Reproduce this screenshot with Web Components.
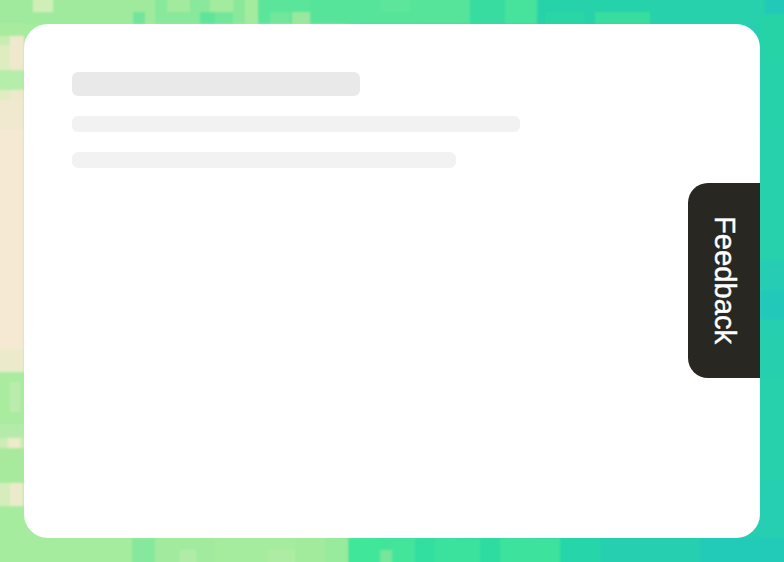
<!DOCTYPE html>
<html>
<head>
<title>Feedback</title>
<style>
  html, body { margin: 0; height: 100%; }
</style>
</head>
<body>
<mosaic-page>
  <skeleton-card>
    <skeleton-line width="288" height="24" tone="#e9e9e9" radius="6"></skeleton-line>
    <skeleton-line width="448" height="16" tone="#f2f2f2" radius="6"></skeleton-line>
    <skeleton-line width="384" height="16" tone="#f2f2f2" radius="6"></skeleton-line>
  </skeleton-card>
  <feedback-tab>Feedback</feedback-tab>
</mosaic-page>

<script>
  // x, y, w, h, colour of the mosaic blocks over the base gradient
  const BLOCKS = [
    // top strip
    [0,0,155,24,'#a0ea9d'],[33,0,20,12,'#d0efb8'],[133,12,12,12,'#70e59b'],[155,0,45,24,'#88e89c'],
    [167,0,23,12,'#a2eb9e'],[200,0,33,12,'#8ae89c'],[210,0,23,12,'#a3eb9e'],[200,12,15,12,'#5fe59b'],
    [215,12,18,12,'#72e69b'],[233,0,25,24,'#8ae89b'],[245,0,13,24,'#a5eb9e'],
    [258,0,52,24,'#5ae59a'],[270,12,20,12,'#72e69b'],[292,12,18,12,'#98e99d'],
    [310,0,160,24,'#55e49a'],[380,0,30,12,'#5ce59b'],[470,0,67,24,'#38dca0'],[505,0,32,24,'#46e29b'],
    [537,0,228,24,'#27d2a9'],[595,12,55,12,'#38de9f'],[545,12,40,12,'#2cd5a6'],[650,0,115,24,'#26d1ab'],
    [765,0,19,14,'#23c9b9'],
    // left strip
    [0,24,24,12,'#a8eb9f'],[0,36,24,9,'#c9ecb0'],[0,45,10,25,'#dfecc0'],[10,36,14,34,'#f0e8cd'],
    [0,70,24,20,'#b5edaa'],[0,90,24,10,'#e0ecc2'],[10,90,14,10,'#eee9cc'],
    [0,100,24,30,'#f0e9cf'],[0,130,24,218,'#f5e9d4'],
    [0,348,24,24,'#ebebcc'],[0,372,24,52,'#a9eb9f'],[10,382,10,30,'#bcecad'],[0,424,24,14,'#b5ebaa'],
    [0,438,24,10,'#cdecb6'],[8,438,12,10,'#eeeacb'],[0,448,24,35,'#a7ea9e'],
    [0,483,24,23,'#d6edbb'],[10,483,12,23,'#ebebcb'],[0,506,24,56,'#a6ec9e'],
    // bottom strip
    [0,538,132,24,'#a6ec9e'],[132,538,23,24,'#85e89c'],[155,538,60,24,'#a2eb9e'],[180,550,16,12,'#b0eca7'],
    [215,538,80,24,'#a6ec9e'],[268,550,30,12,'#aeeca4'],[295,538,30,24,'#a2eb9d'],[325,538,23,24,'#98ea9d'],
    [348,538,32,24,'#40e69a'],[380,538,12,12,'#3fe59b'],[380,550,12,12,'#74e69a'],[392,538,23,24,'#43e59a'],
    [415,538,20,24,'#33dfa0'],[435,538,45,24,'#3ae29d'],[480,538,20,24,'#2fdca2'],[500,538,60,24,'#3ee39c'],
    [560,538,40,24,'#28d5a9'],[600,538,100,24,'#25cfb0'],[700,538,84,24,'#24cbb8'],
    // right strip
    [760,14,24,46,'#27d3a7'],[760,60,24,70,'#27d2aa'],[760,130,24,130,'#27d1ac'],[760,260,24,30,'#25cdb4'],
    [760,290,24,30,'#23c9bb'],[760,320,24,60,'#28d0ae'],[760,380,24,100,'#27d1ab'],[760,480,24,58,'#25ceb2']
  ];

  // push blocks touching the window edge past it, so the blur does not fade them
  function bleed(b) {
    let [x, y, w, h, c] = b;
    if (x === 0) { x = -6; w += 6; }
    if (y === 0) { y = -6; h += 6; }
    if (x + w >= 784) w += 6;
    if (y + h >= 562) h += 6;
    return `<rect x="${x}" y="${y}" width="${w}" height="${h}" fill="${c}"/>`;
  }

  class MosaicPage extends HTMLElement {
    constructor() {
      super();
      this.attachShadow({ mode: 'open' });
      this.shadowRoot.innerHTML = `
        <style>
          :host { display: block; position: relative; width: 784px; height: 562px; box-sizing: border-box; padding: 24px; overflow: hidden; background: #3fe09d; }
          svg { position: absolute; inset: 0; }
          .content { position: relative; height: 100%; }
        </style>
        <svg width="784" height="562" viewBox="0 0 784 562" aria-hidden="true">
          <defs>
            <linearGradient id="base">
              <stop offset="0" stop-color="#a6ec9e"/>
              <stop offset=".43" stop-color="#a4eb9e"/>
              <stop offset=".46" stop-color="#46e59a"/>
              <stop offset=".7" stop-color="#28d3a9"/>
              <stop offset="1" stop-color="#25ceb2"/>
            </linearGradient>
            <filter id="soft" x="-2%" y="-2%" width="104%" height="104%"><feGaussianBlur stdDeviation="1.2"/></filter>
          </defs>
          <rect x="-6" y="-6" width="796" height="574" fill="url(#base)"/>
          <g filter="url(#soft)">${BLOCKS.map(bleed).join('')}</g>
        </svg>
        <div class="content"><slot></slot></div>`;
    }
  }

  class SkeletonCard extends HTMLElement {
    constructor() {
      super();
      this.attachShadow({ mode: 'open' });
      this.shadowRoot.innerHTML = `
        <style>
          :host { display: flex; flex-direction: column; align-items: flex-start; gap: 20px; box-sizing: border-box; height: 100%; padding: 48px; background: #fff; border-radius: 24px; }
        </style>
        <slot></slot>`;
    }
  }

  class SkeletonLine extends HTMLElement {
    constructor() {
      super();
      this.attachShadow({ mode: 'open' });
      this.shadowRoot.innerHTML = `
        <style>
          :host { display: block; }
        </style>`;
    }
    connectedCallback() {
      this.style.width = this.getAttribute('width') + 'px';
      this.style.height = this.getAttribute('height') + 'px';
      this.style.background = this.getAttribute('tone');
      this.style.borderRadius = this.getAttribute('radius') + 'px';
    }
  }

  class FeedbackTab extends HTMLElement {
    constructor() {
      super();
      this.attachShadow({ mode: 'open' });
      this.shadowRoot.innerHTML = `
        <style>
          :host { position: absolute; top: 159px; right: 0; display: flex; align-items: center; justify-content: center; box-sizing: border-box; width: 72px; height: 195px; background: #282722; color: #fff; border-radius: 20px 0 0 20px; font: 29.2px/1 "Liberation Sans", Arial, sans-serif; -webkit-text-stroke: .4px #fff; writing-mode: vertical-rl; }
        </style>
        <slot></slot>`;
    }
  }

  customElements.define('mosaic-page', MosaicPage);
  customElements.define('skeleton-card', SkeletonCard);
  customElements.define('skeleton-line', SkeletonLine);
  customElements.define('feedback-tab', FeedbackTab);
</script>
</body>
</html>
